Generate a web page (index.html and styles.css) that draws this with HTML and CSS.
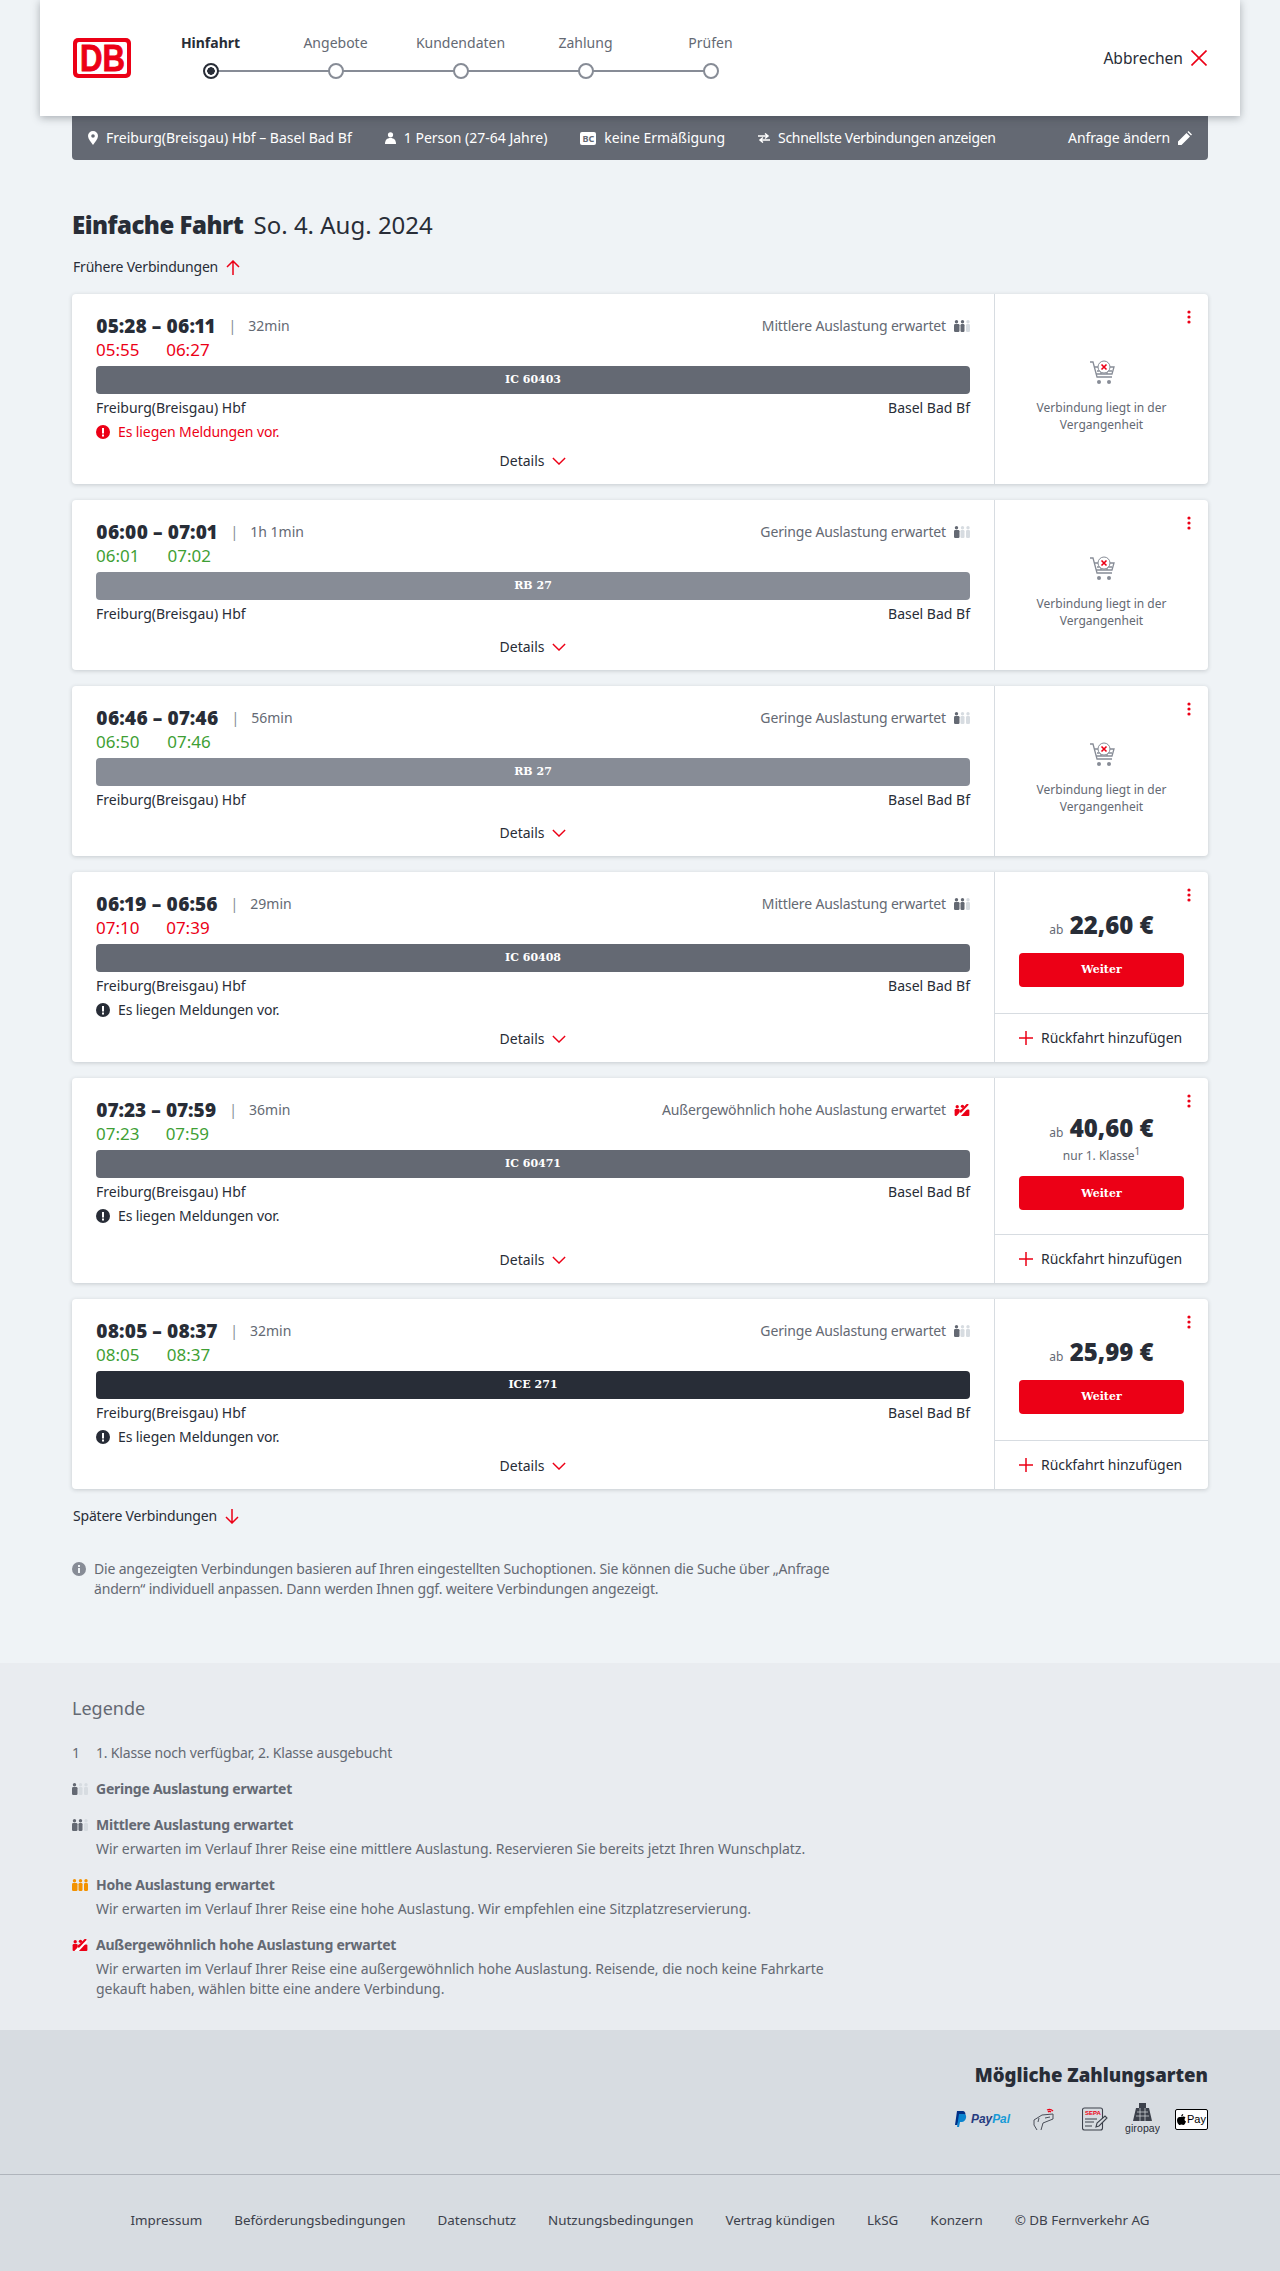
FILE: index.html
```html
<!DOCTYPE html>
<html lang="de">
<head>
    <meta charset="UTF-8">
    <title>Hinfahrt - Angebote</title>
    <link rel="stylesheet" href="styles.css">
</head>
<body>
    <svg class="sprites" width="0" height="0">
        <symbol id="load-low" viewBox="0 0 16 12">
            <circle cx="2.5" cy="1.7" r="1.7" fill="#646973"/><rect x="0" y="4" width="5.500" height="8" rx="1.2" fill="#646973"/>
            <circle cx="8.5" cy="1.7" r="1.7" fill="#d7dce1"/><rect x="6.5" y="4" width="4" height="8" rx="1.2" fill="#d7dce1"/>
            <circle cx="14" cy="1.7" r="1.7" fill="#d7dce1"/><rect x="12" y="4" width="4" height="8" rx="1.2" fill="#d7dce1"/>
        </symbol>
        <symbol id="load-mid" viewBox="0 0 16 12">
            <circle cx="2.5" cy="1.7" r="1.7" fill="#646973"/><rect x="0" y="4" width="5.500" height="8" rx="1.2" fill="#646973"/>
            <circle cx="8.5" cy="1.7" r="1.7" fill="#646973"/><rect x="6.5" y="4" width="4" height="8" rx="1.2" fill="#646973"/>
            <circle cx="14" cy="1.7" r="1.7" fill="#d7dce1"/><rect x="12" y="4" width="4" height="8" rx="1.2" fill="#d7dce1"/>
        </symbol>
        <symbol id="load-high" viewBox="0 0 16 12">
            <circle cx="2.5" cy="1.7" r="1.7" fill="#f39200"/><rect x="0" y="4" width="5.500" height="8" rx="1.2" fill="#f39200"/>
            <circle cx="8.5" cy="1.7" r="1.7" fill="#f39200"/><rect x="6.5" y="4" width="4" height="8" rx="1.2" fill="#f39200"/>
            <circle cx="14" cy="1.7" r="1.7" fill="#f39200"/><rect x="12" y="4" width="4" height="8" rx="1.2" fill="#f39200"/>
        </symbol>
        <symbol id="load-max" viewBox="0 0 16 13">
            <circle cx="2.8" cy="3" r="1.800" fill="#ec0016"/><rect x="0" y="5.500" width="5.500" height="7.500" rx="1.2" fill="#ec0016"/>
            <circle cx="8.5" cy="2.500" r="1.800" fill="#ec0016"/>
            <rect x="6" y="6" width="10" height="7" rx="1" fill="#ec0016"/>
            <path d="M3 14.500 15 1.500" stroke="#fff" stroke-width="3.600"/>
            <path d="M6 9 14.500 0" stroke="#ec0016" stroke-width="2.200"/>
        </symbol>
        <symbol id="dots" viewBox="0 0 4 14">
            <circle cx="2" cy="2" r="1.6"/><circle cx="2" cy="7" r="1.6"/><circle cx="2" cy="12" r="1.6"/>
        </symbol>
        <symbol id="chevron" viewBox="0 0 16 9">
            <path d="M1 1 8 8 15 1" fill="none" stroke="#ec0016" stroke-width="1.6"/>
        </symbol>
        <symbol id="warn" viewBox="0 0 14 14">
            <circle cx="7" cy="7" r="7"/>
            <rect x="6" y="3" width="2" height="5.5" fill="#fff"/><rect x="6" y="9.5" width="2" height="2" fill="#fff"/>
        </symbol>
        <symbol id="cart" viewBox="0 0 26 26">
            <g fill="none" stroke="#878c96" stroke-width="1.3">
                <path d="M1 2H4L8 17H23"/><path d="M5 7H25L23 14H7"/><path d="M8 11H23M12 7V14M18 7V14"/>
            </g>
            <circle cx="10" cy="22" r="2" fill="#878c96"/><circle cx="20" cy="22" r="2" fill="#878c96"/>
            <circle cx="15" cy="7" r="6" fill="#fff" stroke="#878c96"/>
            <path d="M12.5 4.5 17.5 9.5M17.5 4.5 12.5 9.5" stroke="#ec0016" stroke-width="1.6"/>
        </symbol>
        <symbol id="plus" viewBox="0 0 14 14">
            <path d="M7 0V14M0 7H14" stroke="#ec0016" stroke-width="1.5"/>
        </symbol>
    </svg>

    <header class="topbar">
        <svg class="logo" viewBox="0 0 58 40">
            <rect width="58" height="40" rx="5" fill="#ec0016"/>
            <rect x="4" y="4" width="50" height="32" rx="2" fill="#fff"/>
            <text class="logo-text" x="7" y="33" textLength="45" lengthAdjust="spacingAndGlyphs">DB</text>
        </svg>
        <ol class="steps">
            <li class="step active"><span>Hinfahrt</span><i></i></li>
            <li class="step"><span>Angebote</span><i></i></li>
            <li class="step"><span>Kundendaten</span><i></i></li>
            <li class="step"><span>Zahlung</span><i></i></li>
            <li class="step"><span>Prüfen</span><i></i></li>
        </ol>
        <a class="cancel">Abbrechen
            <svg width="16" height="16" viewBox="0 0 16 16"><path d="M0.5 0.5 15.5 15.5M15.5 0.5 0.5 15.5" stroke="#ec0016" stroke-width="1.6"/></svg>
        </a>
    </header>

    <main class="main">
        <div class="summary">
            <span class="summary-item">
                <svg width="10" height="14" viewBox="0 0 10 14"><path fill-rule="evenodd" fill="#fff" d="M5 0a5 5 0 0 1 5 5c0 3-3 6-5 9C3 11 0 8 0 5a5 5 0 0 1 5-5Zm0 3.2a1.8 1.8 0 1 0 0 3.6 1.8 1.8 0 0 0 0-3.6Z"/></svg>
                Freiburg(Breisgau) Hbf – Basel Bad Bf
            </span>
            <span class="summary-item">
                <svg width="11" height="12" viewBox="0 0 11 12"><circle cx="5.5" cy="2.8" r="2.6" fill="#fff"/><path d="M0 12C0 8 2 6 5.500 6S11 8 11 12Z" fill="#fff"/></svg>
                1 Person (27-64 Jahre)
            </span>
            <span class="summary-item">
                <span class="bc">BC</span>
                keine Ermäßigung
            </span>
            <span class="summary-item summary-fast">
                <svg width="12" height="10" viewBox="0 0 12 10"><path d="M0 3H9M7 0.500 10 3 7 5.500M12 7H3M5 4.500 2 7 5 9.500" fill="none" stroke="#fff" stroke-width="1.500"/></svg>
                Schnellste Verbindungen anzeigen
            </span>
            <a class="summary-edit">Anfrage ändern
                <svg width="14" height="14" viewBox="0 0 14 14"><path d="M0 14V10.500L8.500 2 12 5.500 3.500 14ZM9.500 1 10.500 0 14 3.500 13 4.500Z" fill="#fff"/></svg>
            </a>
        </div>

        <h1 class="page-title"><b>Einfache Fahrt</b> So. 4. Aug. 2024</h1>

        <a class="paging paging-prev">Frühere Verbindungen
            <svg width="14" height="15" viewBox="0 0 14 15"><path d="M7 15V1M1 7 7 1 13 7" fill="none" stroke="#ec0016" stroke-width="1.500"/></svg>
        </a>

        <div class="cards">
            <article class="card">
                <div class="card-main">
                    <div class="card-top">
                        <div class="times">
                            <b>05:28 –&nbsp;</b><b>06:11</b><span class="duration"><i>|</i>32min</span>
                            <span class="late">05:55</span><span class="late">06:27</span>
                        </div>
                        <div class="load">Mittlere Auslastung erwartet <svg class="load-icon"><use href="#load-mid"/></svg></div>
                    </div>
                    <div class="train train-ic">IC 60403</div>
                    <div class="stations"><span>Freiburg(Breisgau) Hbf</span><span>Basel Bad Bf</span></div>
                    <div class="notice notice-red"><svg><use href="#warn"/></svg>Es liegen Meldungen vor.</div>
                    <div class="details">Details <svg><use href="#chevron"/></svg></div>
                </div>
                <div class="card-side">
                    <svg class="more"><use href="#dots"/></svg>
                    <div class="past">
                        <svg class="cart"><use href="#cart"/></svg>
                        <p>Verbindung liegt in der Vergangenheit</p>
                    </div>
                </div>
            </article>

            <article class="card">
                <div class="card-main">
                    <div class="card-top">
                        <div class="times">
                            <b>06:00 –&nbsp;</b><b>07:01</b><span class="duration"><i>|</i>1h 1min</span>
                            <span class="ontime">06:01</span><span class="ontime">07:02</span>
                        </div>
                        <div class="load">Geringe Auslastung erwartet <svg class="load-icon"><use href="#load-low"/></svg></div>
                    </div>
                    <div class="train train-rb">RB 27</div>
                    <div class="stations"><span>Freiburg(Breisgau) Hbf</span><span>Basel Bad Bf</span></div>
                    <div class="details">Details <svg><use href="#chevron"/></svg></div>
                </div>
                <div class="card-side">
                    <svg class="more"><use href="#dots"/></svg>
                    <div class="past">
                        <svg class="cart"><use href="#cart"/></svg>
                        <p>Verbindung liegt in der Vergangenheit</p>
                    </div>
                </div>
            </article>

            <article class="card">
                <div class="card-main">
                    <div class="card-top">
                        <div class="times">
                            <b>06:46 –&nbsp;</b><b>07:46</b><span class="duration"><i>|</i>56min</span>
                            <span class="ontime">06:50</span><span class="ontime">07:46</span>
                        </div>
                        <div class="load">Geringe Auslastung erwartet <svg class="load-icon"><use href="#load-low"/></svg></div>
                    </div>
                    <div class="train train-rb">RB 27</div>
                    <div class="stations"><span>Freiburg(Breisgau) Hbf</span><span>Basel Bad Bf</span></div>
                    <div class="details">Details <svg><use href="#chevron"/></svg></div>
                </div>
                <div class="card-side">
                    <svg class="more"><use href="#dots"/></svg>
                    <div class="past">
                        <svg class="cart"><use href="#cart"/></svg>
                        <p>Verbindung liegt in der Vergangenheit</p>
                    </div>
                </div>
            </article>

            <article class="card">
                <div class="card-main">
                    <div class="card-top">
                        <div class="times">
                            <b>06:19 –&nbsp;</b><b>06:56</b><span class="duration"><i>|</i>29min</span>
                            <span class="late">07:10</span><span class="late">07:39</span>
                        </div>
                        <div class="load">Mittlere Auslastung erwartet <svg class="load-icon"><use href="#load-mid"/></svg></div>
                    </div>
                    <div class="train train-ic">IC 60408</div>
                    <div class="stations"><span>Freiburg(Breisgau) Hbf</span><span>Basel Bad Bf</span></div>
                    <div class="notice"><svg><use href="#warn"/></svg>Es liegen Meldungen vor.</div>
                    <div class="details">Details <svg><use href="#chevron"/></svg></div>
                </div>
                <div class="card-side">
                    <svg class="more"><use href="#dots"/></svg>
                    <div class="offer">
                        <div class="price"><small>ab</small> 22,60 €</div>
                        <button class="next">Weiter</button>
                    </div>
                    <div class="return"><svg><use href="#plus"/></svg>Rückfahrt hinzufügen</div>
                </div>
            </article>

            <article class="card">
                <div class="card-main">
                    <div class="card-top">
                        <div class="times">
                            <b>07:23 –&nbsp;</b><b>07:59</b><span class="duration"><i>|</i>36min</span>
                            <span class="ontime">07:23</span><span class="ontime">07:59</span>
                        </div>
                        <div class="load">Außergewöhnlich hohe Auslastung erwartet <svg class="load-icon"><use href="#load-max"/></svg></div>
                    </div>
                    <div class="train train-ic">IC 60471</div>
                    <div class="stations"><span>Freiburg(Breisgau) Hbf</span><span>Basel Bad Bf</span></div>
                    <div class="notice"><svg><use href="#warn"/></svg>Es liegen Meldungen vor.</div>
                    <div class="details">Details <svg><use href="#chevron"/></svg></div>
                </div>
                <div class="card-side">
                    <svg class="more"><use href="#dots"/></svg>
                    <div class="offer">
                        <div class="price"><small>ab</small> 40,60 €</div>
                        <div class="price-note">nur 1. Klasse<sup>1</sup></div>
                        <button class="next">Weiter</button>
                    </div>
                    <div class="return"><svg><use href="#plus"/></svg>Rückfahrt hinzufügen</div>
                </div>
            </article>

            <article class="card">
                <div class="card-main">
                    <div class="card-top">
                        <div class="times">
                            <b>08:05 –&nbsp;</b><b>08:37</b><span class="duration"><i>|</i>32min</span>
                            <span class="ontime">08:05</span><span class="ontime">08:37</span>
                        </div>
                        <div class="load">Geringe Auslastung erwartet <svg class="load-icon"><use href="#load-low"/></svg></div>
                    </div>
                    <div class="train train-ice">ICE 271</div>
                    <div class="stations"><span>Freiburg(Breisgau) Hbf</span><span>Basel Bad Bf</span></div>
                    <div class="notice"><svg><use href="#warn"/></svg>Es liegen Meldungen vor.</div>
                    <div class="details">Details <svg><use href="#chevron"/></svg></div>
                </div>
                <div class="card-side">
                    <svg class="more"><use href="#dots"/></svg>
                    <div class="offer">
                        <div class="price"><small>ab</small> 25,99 €</div>
                        <button class="next">Weiter</button>
                    </div>
                    <div class="return"><svg><use href="#plus"/></svg>Rückfahrt hinzufügen</div>
                </div>
            </article>
        </div>

        <a class="paging paging-next">Spätere Verbindungen
            <svg width="14" height="15" viewBox="0 0 14 15"><path d="M7 0V14M1 8 7 14 13 8" fill="none" stroke="#ec0016" stroke-width="1.500"/></svg>
        </a>

        <div class="info">
            <svg width="14" height="14" viewBox="0 0 14 14"><circle cx="7" cy="7" r="7" fill="#878c96"/><rect x="6" y="6" width="2" height="5" fill="#eff3f6"/><rect x="6" y="3" width="2" height="2" fill="#eff3f6"/></svg>
            <p>Die angezeigten Verbindungen basieren auf Ihren eingestellten Suchoptionen. Sie können die Suche über „Anfrage ändern“ individuell anpassen. Dann werden Ihnen ggf. weitere Verbindungen angezeigt.</p>
        </div>
    </main>

    <section class="legend">
        <h2>Legende</h2>
        <div class="legend-row"><span class="legend-key">1</span><p class="legend-note">1. Klasse noch verfügbar, 2. Klasse ausgebucht</p></div>
        <div class="legend-row"><span class="legend-key"><svg class="load-icon"><use href="#load-low"/></svg></span><div><h3>Geringe Auslastung erwartet</h3></div></div>
        <div class="legend-row"><span class="legend-key"><svg class="load-icon"><use href="#load-mid"/></svg></span><div><h3>Mittlere Auslastung erwartet</h3><p>Wir erwarten im Verlauf Ihrer Reise eine mittlere Auslastung. Reservieren Sie bereits jetzt Ihren Wunschplatz.</p></div></div>
        <div class="legend-row"><span class="legend-key"><svg class="load-icon"><use href="#load-high"/></svg></span><div><h3>Hohe Auslastung erwartet</h3><p>Wir erwarten im Verlauf Ihrer Reise eine hohe Auslastung. Wir empfehlen eine Sitzplatzreservierung.</p></div></div>
        <div class="legend-row"><span class="legend-key"><svg class="load-icon"><use href="#load-max"/></svg></span><div><h3>Außergewöhnlich hohe Auslastung erwartet</h3><p>Wir erwarten im Verlauf Ihrer Reise eine außergewöhnlich hohe Auslastung. Reisende, die noch keine Fahrkarte gekauft haben, wählen bitte eine andere Verbindung.</p></div></div>
    </section>

    <footer class="footer">
        <div class="payment">
            <h2>Mögliche Zahlungsarten</h2>
            <div class="payment-icons">
                <svg class="pay-paypal" width="56" height="16" viewBox="0 0 56 16">
                    <path d="M2 0H7C10 0 11 2 10 5S7 9 5 9H3.500L2.500 14H0Z" fill="#003087"/>
                    <path d="M4 3H8C11 3 11.500 5 11 7S9 11 6.500 11H5L4 16H2Z" fill="#0a84cf"/>
                    <text class="pay-word" x="16" y="12" textLength="39" lengthAdjust="spacingAndGlyphs"><tspan fill="#253b80">Pay</tspan><tspan fill="#179bd7">Pal</tspan></text>
                </svg>
                <svg class="pay-card" width="22" height="24" viewBox="0 0 22 24" fill="none" stroke="#4a4f59" stroke-width="1">
                    <path d="M1 13 9 8 20 7 20 12 10 16 8 23M1 13 1 18 4 23M5 15 6 11M12 11 17 10"/>
                    <path d="M14 3C16 2 18 2 20 4M15 5C16 4 17 4 18 5" stroke="#ec0016" stroke-width="1.300"/>
                </svg>
                <svg class="pay-sepa" width="26" height="24" viewBox="0 0 26 24" fill="none" stroke="#3c414b" stroke-width="1.100">
                    <rect x="0.500" y="1" width="20" height="22" rx="2"/>
                    <text class="sepa-word" x="3" y="8">SEPA</text>
                    <path d="M3 12H15M3 15H12M3 19H10"/>
                    <path d="M14 20 15 16 23 9 25 11 17 19Z" fill="#d7dce1"/>
                </svg>
                <svg class="pay-giro" width="35" height="32" viewBox="0 0 35 32">
                    <path d="M14 0H21V5H24L27 18H8L11 5H14Z" fill="#3c414b"/>
                    <path d="M12 9H23M11 13H24M15 5V18M20 5V18" stroke="#d7dce1" stroke-width="0.700"/>
                    <text class="giro-word" x="0" y="29" textLength="35">giropay</text>
                </svg>
                <span class="apple-pay">
                    <svg width="9" height="11" viewBox="0 0 9 11"><path d="M6.200 0C6.300 1.300 5.300 2.400 4.200 2.400 4.100 1.200 5.100 0.100 6.200 0ZM4.400 3C5 3 5.600 2.500 6.500 2.600 7.200 2.600 8 3 8.500 3.700 7 4.600 7.300 6.700 9 7.400 8.600 8.700 7.500 11 6.300 11 5.600 11 5.200 10.500 4.500 10.500 3.800 10.500 3.400 11 2.700 11 1.500 11 0 8.300 0 6.200 0 4.100 1.400 2.900 2.600 2.900 3.300 2.900 3.900 3 4.400 3Z" fill="#000"/></svg>Pay
                </span>
            </div>
        </div>
        <nav class="footer-links">
            <a>Impressum</a>
            <a>Beförderungsbedingungen</a>
            <a>Datenschutz</a>
            <a>Nutzungsbedingungen</a>
            <a>Vertrag kündigen</a>
            <a>LkSG</a>
            <a>Konzern</a>
            <a>© DB Fernverkehr AG</a>
        </nav>
    </footer>
</body>
</html>
```

FILE: styles.css
```css
* {
    box-sizing: border-box;
}

body {
    margin: 0;
    background-color: #eff3f6;
    color: #282d37;
    font-family: "Noto Sans", Arial, sans-serif;
    font-size: 14px;
    line-height: 20px;
}

h1, h2, h3, p, ol {
    margin: 0;
    padding: 0;
}

.sprites {
    position: absolute;
}

/* header */
.topbar {
    position: relative;
    z-index: 1;
    display: flex;
    align-items: center;
    height: 116px;
    margin: 0 40px;
    padding: 0 33px;
    background-color: #fff;
    box-shadow: 0 2px 8px rgba(40, 45, 55, 0.35);
}

.logo {
    width: 58px;
    height: 40px;
    flex: none;
}

.logo-text {
    font-family: "Liberation Sans", Arial, sans-serif;
    font-size: 36px;
    font-weight: 700;
    fill: #ec0016;
    stroke: #ec0016;
    stroke-width: 0.8px;
}

.steps {
    display: flex;
    list-style: none;
    margin-left: 17px;
    margin-top: -4px;
}

.step {
    position: relative;
    display: flex;
    flex-direction: column;
    align-items: center;
    width: 125px;
    color: #646973;
}

.step i {
    position: relative;
    z-index: 1;
    width: 16px;
    height: 16px;
    margin-top: 10px;
    border: 2px solid #878c96;
    border-radius: 50%;
    background-color: #fff;
}

.step:not(:last-child)::after {
    content: "";
    position: absolute;
    left: 50%;
    bottom: 7px;
    width: 125px;
    height: 2px;
    background-color: #878c96;
}

.step.active {
    color: #282d37;
    font-weight: 700;
}

.step.active i {
    border-color: #282d37;
    background: radial-gradient(circle, #282d37 3.5px, #fff 4px);
}

.cancel {
    display: flex;
    align-items: center;
    gap: 8px;
    margin-left: auto;
    font-size: 15.6px;
}

/* summary bar */
.main {
    padding: 0 72px 64px;
}

.summary {
    display: flex;
    align-items: center;
    height: 44px;
    padding: 0 16px;
    gap: 33px;
    color: #fff;
    background-color: #646973;
    border-radius: 0 0 4px 4px;
}

.summary-item {
    display: flex;
    align-items: center;
    gap: 8px;
}

.summary-fast {
    letter-spacing: -0.3px;
}

.bc {
    width: 16px;
    height: 13px;
    border-radius: 2px;
    background-color: #fff;
    color: #646973;
    font-size: 9px;
    font-weight: 700;
    line-height: 13px;
    text-align: center;
}

.summary-edit {
    display: flex;
    align-items: center;
    gap: 8px;
    margin-left: auto;
    letter-spacing: -0.1px;
}

.page-title {
    margin-top: 49px;
    font-size: 24px;
    font-weight: 400;
    line-height: 32px;
}

.page-title b {
    margin-right: 4px;
    font-weight: 900;
    letter-spacing: -0.5px;
}

.paging {
    display: flex;
    align-items: center;
    gap: 8px;
    height: 20px;
    padding-left: 1px;
    letter-spacing: -0.2px;
}

.paging-prev {
    margin-top: 16px;
}

.paging-next {
    margin-top: 17px;
}

/* connection cards */
.cards {
    display: flex;
    flex-direction: column;
    gap: 16px;
    margin-top: 17px;
}

.card {
    position: relative;
    display: flex;
    min-height: 170px;
    background-color: #fff;
    border-radius: 4px;
    box-shadow: 0 1px 4px rgba(40, 45, 55, 0.2);
}

.card-main {
    display: flex;
    flex-direction: column;
    flex: 1;
    min-width: 0;
    padding: 20px 24px 0;
}

.card-top {
    display: flex;
    justify-content: space-between;
    align-items: flex-start;
}

.times {
    display: inline-grid;
    grid-template-columns: auto auto auto;
    line-height: 24px;
}

.times b {
    font-size: 19px;
    font-weight: 900;
    font-variant-numeric: proportional-nums;
}

.duration {
    grid-column: 3;
    grid-row: 1;
    padding-left: 13px;
    color: #646973;
}

.duration i {
    margin-right: 12px;
    font-style: normal;
    color: #878c96;
}

.late, .ontime {
    font-size: 17px;
}

.late {
    color: #ec0016;
}

.ontime {
    color: #3f9f35;
}

.load {
    display: flex;
    align-items: center;
    gap: 8px;
    height: 24px;
    color: #646973;
    letter-spacing: -0.15px;
}

.load-icon {
    display: block;
    width: 16px;
    height: 12px;
}

.train {
    height: 28px;
    margin-top: 4px;
    border-radius: 4px;
    color: #fff;
    font-family: "DejaVu Serif", serif;
    font-size: 11px;
    font-weight: 700;
    line-height: 28px;
    text-align: center;
}

.train-ic {
    background-color: #646973;
}

.train-rb {
    background-color: #878c96;
}

.train-ice {
    background-color: #282d37;
}

.stations {
    display: flex;
    justify-content: space-between;
    margin-top: 4px;
}

.notice {
    display: flex;
    align-items: center;
    gap: 8px;
    margin-top: 4px;
    fill: #282d37;
    letter-spacing: -0.1px;
}

.notice svg {
    width: 14px;
    height: 14px;
}

.notice-red {
    color: #ec0016;
    fill: #ec0016;
}

.details {
    display: flex;
    justify-content: center;
    align-items: center;
    gap: 8px;
    height: 42px;
    margin-top: auto;
    padding-bottom: 4px;
}

.details svg {
    width: 14px;
    height: 8px;
}

.card-side {
    position: relative;
    display: flex;
    flex-direction: column;
    flex: none;
    width: 214px;
    border-left: 1px solid #d7dce1;
}

.more {
    position: absolute;
    top: 16px;
    right: 17px;
    width: 4px;
    height: 14px;
    fill: #ec0016;
}

.past {
    display: flex;
    flex-direction: column;
    align-items: center;
    justify-content: center;
    flex: 1;
    padding: 14px 24px 0;
    color: #646973;
    font-size: 12px;
    line-height: 17px;
    text-align: center;
}

.cart {
    width: 26px;
    height: 26px;
    margin-bottom: 13px;
}

.offer {
    display: flex;
    flex-direction: column;
    justify-content: center;
    align-items: center;
    flex: 1;
    padding: 32px 24px 24px;
}

.price {
    font-size: 24px;
    font-weight: 900;
    line-height: 36px;
}

.price small {
    color: #646973;
    font-size: 12px;
    font-weight: 400;
    line-height: 0;
}

.price-note {
    color: #646973;
    font-size: 12px;
    line-height: 20px;
}

.price-note sup {
    font-size: 10px;
    line-height: 0;
}

.next {
    width: 100%;
    height: 34px;
    margin-top: 10px;
    border: 0;
    border-radius: 4px;
    background-color: #ec0016;
    color: #fff;
    font-family: "DejaVu Serif", serif;
    font-size: 11px;
    font-weight: 700;
}

.return {
    display: flex;
    align-items: center;
    gap: 8px;
    height: 49px;
    padding-left: 24px;
    border-top: 1px solid #d7dce1;
    letter-spacing: -0.05px;
}

.return svg {
    width: 14px;
    height: 14px;
}

.info {
    display: flex;
    gap: 8px;
    margin-top: 33px;
    color: #646973;
    letter-spacing: -0.18px;
}

.info svg {
    flex: none;
    margin-top: 3px;
}

.info p {
    max-width: 750px;
}

/* legend */
.legend {
    padding: 31px 72px;
    background-color: #e9ecf0;
    color: #646973;
}

.legend h2 {
    font-size: 18px;
    font-weight: 400;
    line-height: 28px;
    margin-bottom: 21px;
}

.legend-row {
    display: flex;
    margin-top: 16px;
}

.legend h2 + .legend-row {
    margin-top: 0;
}

.legend-key {
    flex: none;
    width: 24px;
    padding-top: 4px;
    line-height: 12px;
}

.legend-row h3 {
    font-size: 14px;
    font-weight: 700;
    letter-spacing: -0.25px;
}

.legend-row h3 + p {
    margin-top: 4px;
}

.legend-row p {
    max-width: 770px;
    letter-spacing: -0.05px;
}

.legend-row .legend-note {
    letter-spacing: -0.19px;
}

/* footer */
.footer {
    background-color: #d7dce1;
}

.payment {
    display: flex;
    flex-direction: column;
    align-items: flex-end;
    height: 145px;
    padding: 31px 72px 0;
    border-bottom: 1px solid #afb4bb;
}

.payment h2 {
    font-size: 18.6px;
    font-weight: 900;
    line-height: 28px;
}

.payment-icons {
    display: flex;
    align-items: center;
    height: 32px;
    margin-top: 14px;
}

.pay-card {
    margin-left: 22px;
}

.pay-sepa {
    margin-left: 27px;
}

.pay-giro {
    margin-left: 17px;
}

.pay-word {
    font-family: "Liberation Sans", Arial, sans-serif;
    font-size: 12px;
    font-weight: 700;
    font-style: italic;
}

.sepa-word {
    font-family: "Liberation Sans", Arial, sans-serif;
    font-size: 6px;
    font-weight: 700;
    fill: #ec0016;
    stroke: none;
}

.giro-word {
    font-family: "Liberation Sans", Arial, sans-serif;
    font-size: 10.5px;
    fill: #282d37;
}

.apple-pay {
    display: flex;
    align-items: center;
    justify-content: center;
    gap: 1px;
    width: 33px;
    height: 21px;
    margin-left: 15px;
    border: 1px solid #000;
    border-radius: 2px;
    background-color: #fff;
    color: #000;
    font-family: "Liberation Sans", Arial, sans-serif;
    font-size: 11px;
}

.footer-links {
    display: flex;
    justify-content: center;
    align-items: center;
    gap: 32px;
    height: 96px;
    padding-bottom: 6px;
    color: #3c414b;
    font-size: 13.4px;
}
```
